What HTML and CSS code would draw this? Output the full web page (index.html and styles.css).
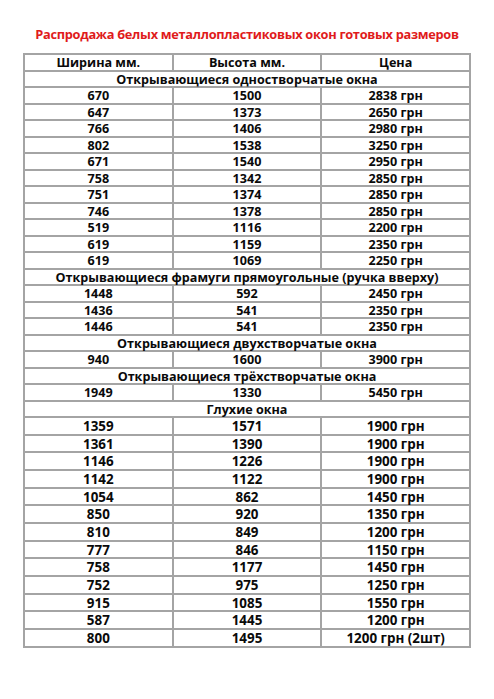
FILE: index.html
```html
<!DOCTYPE html>
<html lang="ru">
<head>
<meta charset="utf-8">
<link rel="stylesheet" href="styles.css">
</head>
<body>
<div class="page">
  <h1 class="title">Распродажа белых металлопластиковых окон готовых размеров</h1>
  <table class="grid">
    <tbody class="small">
      <tr><td>Ширина мм.</td><td>Высота мм.</td><td>Цена</td></tr>
      <tr><td colspan="3">Открывающиеся одностворчатые окна</td></tr>
      <tr><td>670</td><td>1500</td><td>2838 грн</td></tr>
      <tr><td>647</td><td>1373</td><td>2650 грн</td></tr>
      <tr><td>766</td><td>1406</td><td>2980 грн</td></tr>
      <tr><td>802</td><td>1538</td><td>3250 грн</td></tr>
      <tr><td>671</td><td>1540</td><td>2950 грн</td></tr>
      <tr><td>758</td><td>1342</td><td>2850 грн</td></tr>
      <tr><td>751</td><td>1374</td><td>2850 грн</td></tr>
      <tr><td>746</td><td>1378</td><td>2850 грн</td></tr>
      <tr><td>519</td><td>1116</td><td>2200 грн</td></tr>
      <tr><td>619</td><td>1159</td><td>2350 грн</td></tr>
      <tr><td>619</td><td>1069</td><td>2250 грн</td></tr>
      <tr><td colspan="3">Открывающиеся фрамуги прямоугольные (ручка вверху)</td></tr>
      <tr><td>1448</td><td>592</td><td>2450 грн</td></tr>
      <tr><td>1436</td><td>541</td><td>2350 грн</td></tr>
      <tr><td>1446</td><td>541</td><td>2350 грн</td></tr>
      <tr><td colspan="3">Открывающиеся двухстворчатые окна</td></tr>
      <tr><td>940</td><td>1600</td><td>3900 грн</td></tr>
      <tr><td colspan="3">Открывающиеся трёхстворчатые окна</td></tr>
      <tr><td>1949</td><td>1330</td><td>5450 грн</td></tr>
      <tr><td colspan="3">Глухие окна</td></tr>
    </tbody>
    <tbody class="large">
      <tr><td>1359</td><td>1571</td><td>1900 грн</td></tr>
      <tr><td>1361</td><td>1390</td><td>1900 грн</td></tr>
      <tr><td>1146</td><td>1226</td><td>1900 грн</td></tr>
      <tr><td>1142</td><td>1122</td><td>1900 грн</td></tr>
      <tr><td>1054</td><td>862</td><td>1450 грн</td></tr>
      <tr><td>850</td><td>920</td><td>1350 грн</td></tr>
      <tr><td>810</td><td>849</td><td>1200 грн</td></tr>
      <tr><td>777</td><td>846</td><td>1150 грн</td></tr>
      <tr><td>758</td><td>1177</td><td>1450 грн</td></tr>
      <tr><td>752</td><td>975</td><td>1250 грн</td></tr>
      <tr><td>915</td><td>1085</td><td>1550 грн</td></tr>
      <tr><td>587</td><td>1445</td><td>1200 грн</td></tr>
      <tr><td>800</td><td>1495</td><td>1200 грн (2шт)</td></tr>
    </tbody>
  </table>
</div>
</body>
</html>
```

FILE: styles.css
```css
html, body {
  margin: 0;
  padding: 0;
  background: #ffffff;
}
.page {
  width: 494px;
  padding-top: 25px;
  font-family: "Open Sans", Lato, "Liberation Sans", sans-serif;
  font-weight: 700;
  color: #0a0a0a;
}
.title {
  margin: 0 0 9px 0;
  height: 19px;
  line-height: 19px;
  text-align: center;
  font-size: 12.8px;
  letter-spacing: -0.3px;
  font-weight: 700;
  color: #e01b1b;
}
.grid {
  margin-left: 23px;
  width: 448px;
  border-collapse: collapse;
  table-layout: fixed;
}
.grid td {
  border: 2px solid #a4a4a4;
  padding: 2px 0 0 0;
  text-align: center;
  white-space: nowrap;
  vertical-align: middle;
}
.small td {
  height: 12.5px;
  line-height: 12.5px;
  font-size: 12.6px;
}
.large td {
  height: 13.67px;
  line-height: 13.67px;
  font-size: 13.4px;
}
```
